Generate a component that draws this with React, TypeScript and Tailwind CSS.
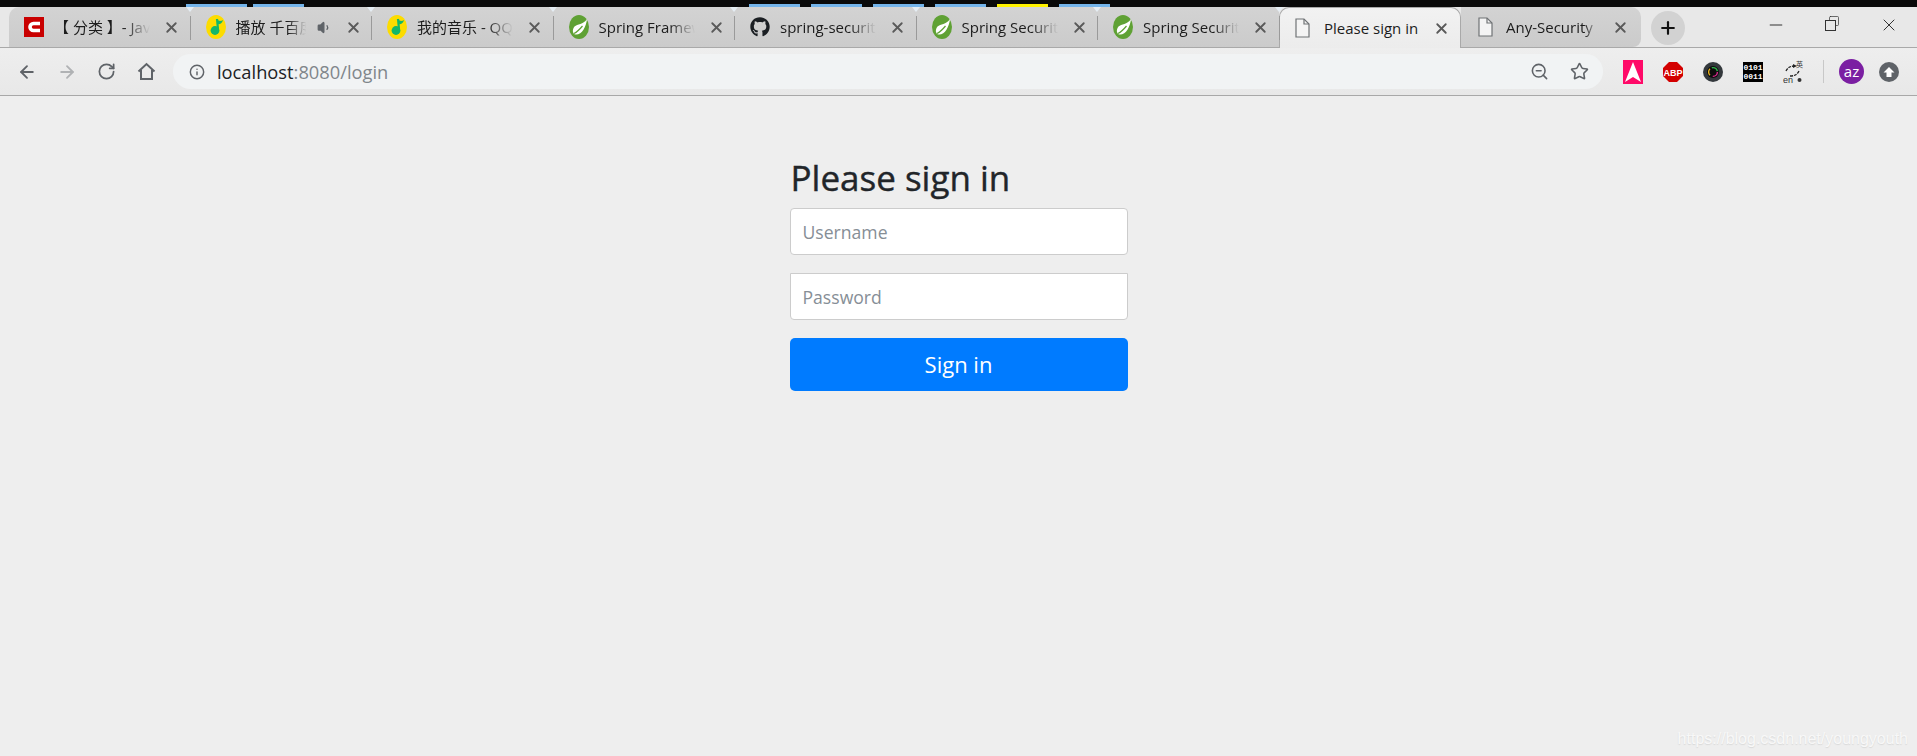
import { ArrowLeft, ArrowRight, Info, Minus, Plus, RotateCw, Square, Star, Volume1, X, ZoomOut } from 'lucide-react'
import { FaGithub } from 'react-icons/fa'

const FONT = "font-['Open_Sans','Noto_Sans_CJK_SC',sans-serif]"

function CsdnIcon() {
  return (
    <svg width="20" height="20" viewBox="0 0 20 20">
      <rect width="20" height="20" fill="#c90000" />
      <path d="M16 6.5 H9.5 a3.5 3.5 0 0 0 0 7 H16" fill="none" stroke="#fff" strokeWidth="3.6" />
    </svg>
  )
}

function QQMusicIcon() {
  return (
    <svg width="20" height="24" viewBox="0 0 20 24">
      <ellipse cx="10" cy="12" rx="10" ry="12" fill="#fcdc00" />
      <path d="M11 4 L12 14" stroke="#12b76a" strokeWidth="2.2" fill="none" />
      <path d="M11 3.5 C12.5 7 15.5 6 17 5 C16 9 13 10 11.4 9" fill="#12b76a" />
      <circle cx="9" cy="15.5" r="4.4" fill="#12b76a" />
    </svg>
  )
}

function SpringIcon() {
  return (
    <svg width="20" height="24" viewBox="0 0 20 24">
      <ellipse cx="10" cy="12" rx="10" ry="12" fill="#5fa134" />
      <path d="M18 4 C17 12 13 20 6.5 19.5 C3.5 19 3 14.5 5.5 11.5 C8.5 9 14 10 18 4 Z" fill="#fff" />
      <path d="M5 18.5 C8 17 11 14 13.5 11" fill="none" stroke="#5fa134" strokeWidth="1.2" />
    </svg>
  )
}

function PageIcon() {
  return (
    <svg width="15" height="20" viewBox="0 0 15 20" fill="none" stroke="#6f7275" strokeWidth="1.2">
      <path d="M1 1 H9 L14 6 V19 H1 Z" fill="#f4f4f4" />
      <path d="M9 1 V6 H14" />
    </svg>
  )
}

function HomeIcon() {
  return (
    <svg className="ml-[21px]" width="19" height="19" viewBox="0 0 19 19" fill="none" stroke="#5f6368" strokeWidth="2">
      <path d="M1.5 9.5 L9.5 2 L17.5 9.5" />
      <path d="M4 8 V17 H15 V8" />
    </svg>
  )
}

const TABS = [
  { title: '【 分类 】- JavaEE', icon: <CsdnIcon />, width: 'w-[101px]' },
  { title: '播放 千百度 - 许嵩', icon: <QQMusicIcon />, width: 'w-[74px]', audio: true },
  { title: '我的音乐 - QQ音乐', icon: <QQMusicIcon />, width: 'w-[101px]' },
  { title: 'Spring Framework', icon: <SpringIcon />, width: 'w-[101px]' },
  { title: 'spring-security', icon: <FaGithub className="size-5 text-[#1b1f23]" />, width: 'w-[101px]' },
  { title: 'Spring Security', icon: <SpringIcon />, width: 'w-[101px]' },
  { title: 'Spring Security', icon: <SpringIcon />, width: 'w-[101px]' },
]

function Tab({ title, icon, width, audio }: { title: string; icon: React.ReactNode; width: string; audio?: boolean }) {
  return (
    <div className="relative flex h-full w-[181.5px] shrink-0 items-center pl-[15px] border-r border-[#9a9a9a] [border-image:linear-gradient(to_bottom,transparent_24%,#9a9a9a_24%,#9a9a9a_82%,transparent_82%)_1]">
      <span className="flex w-5 shrink-0 justify-center">{icon}</span>
      <span className={`ml-[10px] ${width} shrink-0 overflow-hidden whitespace-nowrap text-[15px] text-[#1c1c1c] [mask-image:linear-gradient(to_right,black_70%,transparent_95%)]`}>
        {title}
      </span>
      {audio && <Volume1 className="ml-[7px] size-[15px] shrink-0 fill-[#5f6368] text-[#5f6368]" />}
      <X className={`${audio ? 'ml-[13px]' : 'ml-[8px]'} size-[17px] shrink-0 text-[#5a5a5a]`} strokeWidth={2.6} />
      <span className="absolute right-[-4px] top-0 border-x-[4px] border-t-[5px] border-x-transparent border-t-[#e6eef4]" />
    </div>
  )
}

function TopStrip() {
  const segment = 'h-[3px] bg-[#74b4ea]'
  return (
    <div className="flex h-[7px] items-end bg-[#0a0a0a]">
      <div className={`${segment} ml-[186px] w-[61px]`} />
      <div className={`${segment} ml-[6px] w-[51px]`} />
      <div className={`${segment} ml-[445px] w-[51px]`} />
      <div className={`${segment} ml-[11px] w-[51px]`} />
      <div className={`${segment} ml-[11px] w-[51px]`} />
      <div className={`${segment} ml-[11px] w-[51px]`} />
      <div className="ml-[11px] h-[3px] w-[51px] bg-[#fff200]" />
      <div className={`${segment} ml-[11px] w-[51px]`} />
    </div>
  )
}

function TabStrip() {
  return (
    <div className="flex h-[41px] items-stretch border-b border-[#a9a9a9] bg-[#e8e8e8] pl-[9px]">
      <div className="flex w-[1270px] shrink-0 items-stretch rounded-tl-[10px] bg-gradient-to-b from-[#d3d3d3] to-[#cbcbcb]">
        {TABS.map((tab, i) => (
          <Tab key={i} {...tab} />
        ))}
      </div>
      {/* active tab sits on top of the strip border */}
      <div className="-mb-px flex w-[182px] shrink-0 items-center rounded-t-[10px] border border-b-0 border-[#a9a9a9] bg-gradient-to-b from-[#f2f2f2] to-[#ececec] pl-[15px]">
        <PageIcon />
        <span className="ml-[14px] w-[104px] whitespace-nowrap text-[15px] text-[#1c1c1c]">Please sign in</span>
        <X className="ml-[5px] size-[17px] text-[#5a5a5a]" strokeWidth={2.6} />
      </div>
      <div className="flex w-[180px] shrink-0 items-center rounded-tr-[10px] rounded-br-[8px] bg-gradient-to-b from-[#d3d3d3] to-[#cbcbcb] pl-[17px]">
        <PageIcon />
        <span className="ml-[13px] w-[92px] overflow-hidden whitespace-nowrap text-[15px] text-[#1c1c1c] [mask-image:linear-gradient(to_right,black_85%,transparent)]">
          Any-Security | Spring
        </span>
        <X className="ml-[14px] size-[17px] text-[#5a5a5a]" strokeWidth={2.6} />
      </div>
      <div className="ml-[10px] mt-[4px] flex size-[34px] shrink-0 items-center justify-center rounded-full bg-[#d2d2d2]">
        <Plus className="size-[20px] text-[#111]" strokeWidth={2.6} />
      </div>
      <div className="ml-[81px] flex items-start pt-[8px]">
        <Minus className="size-[20px] text-[#333]" strokeWidth={1.2} />
        <div className="relative ml-[39px] mt-[2px] size-[14px]">
          <Square className="absolute left-[3px] top-[-2px] size-[12px] text-[#333]" strokeWidth={1.4} />
          <div className="absolute bottom-0 left-0 size-[11px] border border-[#333] bg-[#e8e8e8]" />
        </div>
        <X className="ml-[40px] size-[20px] text-[#333]" strokeWidth={1.2} />
      </div>
    </div>
  )
}

function AdblockIcon() {
  return (
    <svg width="20" height="20" viewBox="0 0 20 20">
      <path d="M6 0 H14 L20 6 V14 L14 20 H6 L0 14 V6 Z" fill="#d30000" />
      <text x="10" y="13.5" textAnchor="middle" fontSize="9" fontWeight="700" fill="#fff" fontFamily="Liberation Sans">ABP</text>
    </svg>
  )
}

function Extensions() {
  return (
    <div className="flex items-center">
      <svg className="ml-[20px]" width="20" height="24" viewBox="0 0 20 24">
        <rect width="20" height="24" fill="#ff0a68" />
        <path d="M10 2 L18 22 L10 17 L2 22 Z" fill="#fff" />
      </svg>
      <span className="ml-[20px]"><AdblockIcon /></span>
      <svg className="ml-[20px]" width="20" height="20" viewBox="0 0 20 20">
        <circle cx="10" cy="10" r="10" fill="#33383c" />
        <circle cx="10" cy="10" r="6" fill="#0c0c0c" />
        <circle cx="10" cy="10" r="4.4" fill="none" stroke="#d92a8c" strokeWidth="1.4" strokeDasharray="7 21" />
        <circle cx="10" cy="10" r="4.4" fill="none" stroke="#2fb44a" strokeWidth="1.4" strokeDasharray="7 21" strokeDashoffset="9" />
        <circle cx="10" cy="10" r="4.4" fill="none" stroke="#e8b21c" strokeWidth="1.4" strokeDasharray="7 21" strokeDashoffset="18" />
      </svg>
      <div className="ml-[20px] flex h-5 w-5 flex-col items-center justify-center bg-black font-['Liberation_Mono',monospace] text-[8px] font-bold leading-[9px] text-white">
        <span>0101</span>
        <span>0011</span>
      </div>
      <svg className="ml-[20px]" width="20" height="24" viewBox="0 0 20 24">
        <path d="M3 11 C5 7 8 6 12 6" fill="none" stroke="#222" strokeWidth="1.3" strokeDasharray="3 1" />
        <path d="M10 4 L14 6 L10 8 Z" fill="#222" />
        <path d="M16 11 C14 15 11 16 7 16" fill="none" stroke="#222" strokeWidth="1.3" strokeDasharray="3 1" />
        <text x="13" y="7" fontSize="7" fill="#333" fontFamily="Noto Sans CJK SC">英</text>
        <text x="0" y="23" fontSize="9" fill="#333" fontFamily="Liberation Sans">en</text>
        <circle cx="16.5" cy="20" r="2" fill="#333" />
      </svg>
      <div className="ml-[20px] h-[23px] w-px bg-[#c8c8c8]" />
      <div className="ml-[15px] flex size-[25px] items-center justify-center rounded-full bg-[#7b1fa2] text-[15px] leading-none text-white">az</div>
      <div className="ml-[15px] flex size-5 items-center justify-center rounded-full bg-[#5f6368]">
        <svg width="12" height="12" viewBox="0 0 12 12">
          <path d="M6 1 L11.5 6.5 H8.5 V11 H3.5 V6.5 H0.5 Z" fill="#fff" />
        </svg>
      </div>
    </div>
  )
}

function AddressBar() {
  return (
    <div className="flex h-[48px] items-center border-b border-[#a8a8a8] bg-gradient-to-b from-[#eeeeee] to-[#e8e8e8] pl-[17px]">
      <ArrowLeft className="size-[20px] text-[#5f6368]" strokeWidth={2.2} />
      <ArrowRight className="ml-[20px] size-[20px] text-[#b0b2b4]" strokeWidth={2.2} />
      <RotateCw className="ml-[20px] size-[19px] text-[#5f6368]" strokeWidth={2.2} />
      <HomeIcon />
      <div className="ml-[17px] flex h-[35px] w-[1430px] shrink-0 items-center rounded-full bg-[#f1f3f4] pl-[16px]">
        <Info className="size-[16px] text-[#5f6368]" strokeWidth={2.2} />
        <span className="ml-[12px] text-[18.3px] text-[#202124]">
          localhost<span className="text-[#80868b]">:8080/login</span>
        </span>
        <ZoomOut className="ml-auto size-[19px] text-[#5f6368]" strokeWidth={2} />
        <Star className="ml-[21px] mr-[14px] size-[19px] text-[#5f6368]" strokeWidth={2} />
      </div>
      <Extensions />
    </div>
  )
}

export default function App() {
  return (
    <div className={`relative flex h-screen flex-col overflow-hidden bg-[#eeeeee] ${FONT}`}>
      <TopStrip />
      <TabStrip />
      <AddressBar />

      <main className="flex flex-1 justify-center">
        <form className="flex w-[338px] flex-col pt-[60px]" onSubmit={(e) => e.preventDefault()}>
          <h2 className="mb-[8px] pl-px text-[35px] font-medium leading-[44px] text-[#212529] [-webkit-text-stroke:0.4px_#212529]">Please sign in</h2>
          <input
            placeholder="Username"
            className="h-[47px] rounded-[4px] border border-[#cccccc] bg-white px-3 text-[17.6px] placeholder:text-[#868e96] outline-none"
          />
          <input
            type="password"
            placeholder="Password"
            className="mt-[18px] h-[47px] rounded-b-[4px] border border-[#cccccc] bg-white px-3 text-[17.6px] placeholder:text-[#868e96] outline-none"
          />
          <button className="mt-[18px] h-[53px] rounded-[5px] bg-[#007bff] text-[22px] text-white">Sign in</button>
        </form>
      </main>

      <span className="absolute bottom-[5px] right-[9px] font-['Liberation_Sans',sans-serif] text-[16px] text-[#f8f8f8] [text-shadow:0_1px_1px_#d8d8d8]">
        https://blog.csdn.net/youngyouth
      </span>
    </div>
  )
}
